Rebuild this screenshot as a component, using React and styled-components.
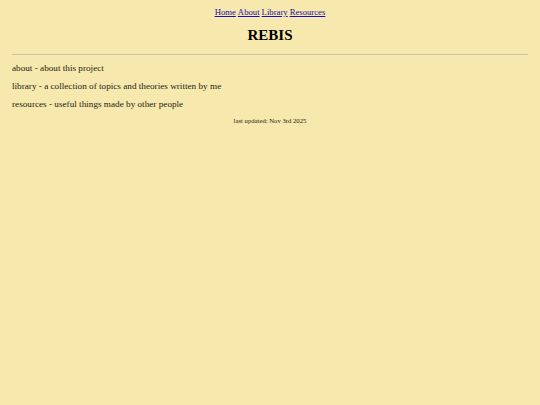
import React from 'react';
import styled, {createGlobalStyle} from 'styled-components';

const GlobalStyle = createGlobalStyle`
    html, body {
        margin: 0;
        background: #f7e8ad;
    }
    body {
        font-family: "Liberation Serif", "Times New Roman", serif;
        color: #231d12;
    }
`;

const Page = styled.div`
    padding: 6px 12px 0;
`;

const Nav = styled.nav`
    display: flex;
    justify-content: center;
    gap: 2px;
    font-size: 8.7px;
    line-height: 12px;

    a {
        color: #1a0dab;
        text-decoration: underline;
    }
`;

const Title = styled.h1`
    margin: 8px 0 0;
    text-align: center;
    font-size: 15px;
    line-height: 18px;
    font-weight: bold;
    color: #000;
`;

const Rule = styled.hr`
    margin: 10px 0 4px;
    border: none;
    border-top: 1px solid #c9c2a4;
`;

const Entry = styled.p`
    margin: 0;
    font-size: 9.2px;
    line-height: 18px;
`;

const Updated = styled.p`
    margin: 3px 0 0;
    text-align: center;
    font-size: 6.7px;
    line-height: 10px;
`;

const entries = [
    'about - about this project',
    'library - a collection of topics and theories written by me',
    'resources - useful things made by other people',
];

export default function App() {
    return (
        <>
            <GlobalStyle />
            <Page>
                <Nav>
                    <a href="#">Home</a>
                    <a href="#">About</a>
                    <a href="#">Library</a>
                    <a href="#">Resources</a>
                </Nav>
                <Title>REBIS</Title>
                <Rule />
                {entries.map(text => <Entry key={text}>{text}</Entry>)}
                <Updated>last updated: Nov 3rd 2025</Updated>
            </Page>
        </>
    );
}
